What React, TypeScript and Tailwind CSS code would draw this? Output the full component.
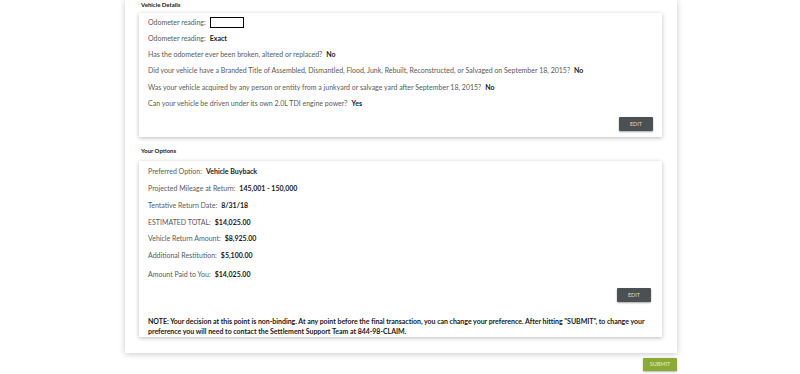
import React from "react";

const font = { fontFamily: "Lato, 'Liberation Sans', sans-serif" };

function Row({ label, value, tall, children }: { label: string; value?: string; tall?: boolean; children?: React.ReactNode }) {
  return (
    <div className={`flex items-center text-[7px] text-[#5a5a5a] ${tall ? "h-[16.8px]" : "h-[16.2px]"}`}>
      <span>{label}</span>
      {value && <span className="ml-[4px] font-bold text-[#1a1a1a]">{value}</span>}
      {children}
    </div>
  );
}

function EditButton() {
  return (
    <button className="flex h-[14px] w-[34px] items-center justify-center rounded-[1px] bg-[#4b5052] text-[5.5px] text-[#d8d8d8] shadow-[0_1px_2px_rgba(0,0,0,0.35)]">
      EDIT
    </button>
  );
}

export default function App() {
  return (
    <div className="min-h-[374px] w-[800px] bg-white" style={font}>
      <div className="ml-[125px] w-[552px] bg-white pb-[16px] shadow-[0_1px_6px_rgba(0,0,0,0.22)]">
        <div className="pl-[16px] pt-[1px] text-[6px] font-bold leading-[8px] text-[#222]">Vehicle Details</div>

        {/* Vehicle details card */}
        <div className="ml-[14px] mt-[4px] w-[523px] bg-white px-[9px] pb-[6px] pt-[1px] shadow-[0_1px_4px_rgba(0,0,0,0.28)]">
          <Row label="Odometer reading:">
            <span className="ml-[4px] h-[11px] w-[34px] border-[1.5px] border-black" />
          </Row>
          <Row label="Odometer reading:" value="Exact" />
          <Row label="Has the odometer ever been broken, altered or replaced?" value="No" />
          <Row
            label="Did your vehicle have a Branded Title of Assembled, Dismantled, Flood, Junk, Rebuilt, Reconstructed, or Salvaged on September 18, 2015?"
            value="No"
          />
          <Row label="Was your vehicle acquired by any person or entity from a junkyard or salvage yard after September 18, 2015?" value="No" />
          <Row label="Can your vehicle be driven under its own 2.0L TDI engine power?" value="Yes" />
          <div className="mt-[6px] flex justify-end">
            <EditButton />
          </div>
        </div>

        <div className="pl-[16px] pt-[10px] text-[6px] font-bold leading-[8px] text-[#222]">Your Options</div>

        {/* Options card */}
        <div className="ml-[14px] mt-[6px] w-[523px] bg-white pb-[1px] pl-[9px] pr-[2px] pt-[2px] shadow-[0_1px_4px_rgba(0,0,0,0.28)]">
          <Row tall label="Preferred Option:" value="Vehicle Buyback" />
          <Row tall label="Projected Mileage at Return:" value="145,001 - 150,000" />
          <Row tall label="Tentative Return Date:" value="8/31/18" />
          <Row tall label="ESTIMATED TOTAL:" value="$14,025.00" />
          <Row tall label="Vehicle Return Amount:" value="$8,925.00" />
          <Row tall label="Additional Restitution:" value="$5,100.00" />
          <div className="h-[2px]" />
          <Row tall label="Amount Paid to You:" value="$14,025.00" />
          <div className="mt-[5px] flex justify-end pr-[9px]">
            <EditButton />
          </div>
          <p className="mt-[14px] text-[7px] font-bold leading-[10px] tracking-[-0.03px] text-[#1a1a1a]">
            NOTE: Your decision at this point is non-binding. At any point before the final transaction, you can change your preference. After hitting
            "SUBMIT", to change your preference you will need to contact the Settlement Support Team at 844-98-CLAIM.
          </p>
        </div>
      </div>
      <div className="flex w-[677px] justify-end pt-[5px]">
        <button className="flex h-[13px] w-[34px] items-center justify-center rounded-[1px] bg-[#8aaa35] text-[5.5px] text-[#e8f0d4] shadow-[0_1px_2px_rgba(0,0,0,0.3)]">
          SUBMIT
        </button>
      </div>
    </div>
  );
}
